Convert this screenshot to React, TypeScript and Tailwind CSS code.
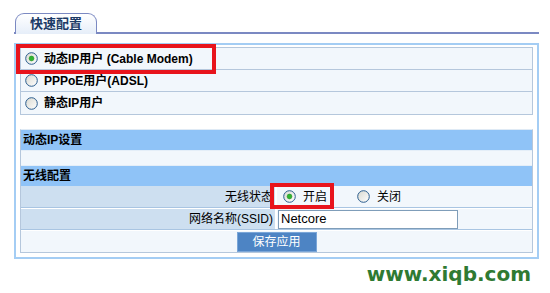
const Radio = ({ checked }: { checked?: boolean }) => (
  <svg width="13" height="13" viewBox="0 0 13 13" className="shrink-0">
    <defs>
      <linearGradient id="rg" x1="0" y1="0" x2="1" y2="1">
        <stop offset="0" stopColor="#d8d8d0" />
        <stop offset="1" stopColor="#ffffff" />
      </linearGradient>
    </defs>
    <circle cx="6.5" cy="6.5" r="5.8" fill="url(#rg)" stroke="#2b5d8e" strokeWidth="1" />
    {checked && <circle cx="6.5" cy="6.5" r="2.4" fill="#2fb52f" stroke="#1e8f1e" strokeWidth="0.6" />}
  </svg>
);

const font = "font-['Liberation_Sans','Noto_Sans_CJK_SC',sans-serif]";

export default function App() {
  const modes = [
    { label: "动态IP用户 (Cable Modem)", checked: true },
    { label: "PPPoE用户(ADSL)" },
    { label: "静态IP用户" },
  ];

  return (
    <div className={`relative w-[550px] h-[293px] bg-white text-[12px] text-black ${font}`}>
      {/* tab bar */}
      <div className="flex items-end pt-[13px] pl-[14px] pr-[11px]">
        <div className="w-[1px] h-[2px] bg-[#7b89c2]" />
        <div className="w-[82px] h-[21px] rounded-t-[9px] border border-b-0 border-[#7b89c2] bg-gradient-to-b from-white to-[#e6eef9] flex items-center justify-center font-bold text-[13px] text-[#1c3a66]">
          快速配置
        </div>
        <div className="flex-1 h-[2px] bg-[#7b89c2]" />
      </div>

      {/* main box */}
      <div className="ml-[14px] mt-[9px] w-[525px] border-2 border-[#a4cdf4] px-[4px] pt-[2px] pb-[4px]">
        <div className="border border-[#b5c7dc]">
          {modes.map((m, i) => (
            <div
              key={m.label}
              className={`h-[22px] flex items-center gap-[6px] pl-[4px] bg-[#f2f7fc] font-bold ${i < 2 ? "border-b border-[#b5c7dc]" : ""}`}
            >
              <Radio checked={m.checked} />
              <span>{m.label}</span>
            </div>
          ))}
        </div>

        <div className="mt-[14px] border border-[#b5c7dc] border-t-[#dfeaf5]">
          <div className="h-[20px] flex items-center pl-[2px] bg-[#8fc3f7] font-bold">动态IP设置</div>
          <div className="h-[16px] bg-[#f2f7fc] border-y border-[#e4eef8]" />
          <div className="h-[20px] flex items-center pl-[2px] bg-[#8fc3f7] font-bold">无线配置</div>
          <div className="flex h-[22px] border-b border-[#a9c5e2]">
            <div className="w-[254px] bg-[#cddff0] flex items-center justify-end pr-[2px]">无线状态</div>
            <div className="flex-1 flex items-center bg-[#f2f7fc] border-l-2 border-white pl-[6px]">
              <Radio checked />
              <span className="ml-[7px]">开启</span>
              <span className="ml-[30px]"><Radio /></span>
              <span className="ml-[7px]">关闭</span>
            </div>
          </div>
          <div className="flex h-[22px] border-b border-[#a9c5e2] border-t border-t-white">
            <div className="w-[254px] bg-[#cddff0] flex items-center justify-end pr-[2px]">网络名称(SSID)</div>
            <div className="flex-1 flex items-center bg-[#f2f7fc] border-l-2 border-white pl-[1px]">
              <input
                defaultValue="Netcore"
                className="w-[180px] h-[19px] border border-[#7f9db9] bg-white px-[2px] text-[13px] outline-none"
              />
            </div>
          </div>
          <div className="h-[22px] flex items-center justify-center bg-[#f2f7fc] border-t border-t-white">
            <button className="w-[80px] h-[20px] bg-[#4d84c4] border border-[#7aa6d8] text-white text-[12px]">
              保存应用
            </button>
          </div>
        </div>
      </div>

      {/* watermark */}
      <div className="flex justify-end pr-[19px] pt-[1px] font-['DejaVu_Sans',sans-serif] font-bold text-[20px] leading-[28px] text-[#2f7a32]">
        www.xiqb.com
      </div>

      {/* red annotations */}
      <div className="absolute left-[16px] top-[44px] w-[200px] h-[30px] border-[4px] border-[#e8141c]" />
      <div className="absolute left-[270px] top-[183px] w-[64px] h-[26px] border-[4px] border-[#e8141c]" />
    </div>
  );
}
